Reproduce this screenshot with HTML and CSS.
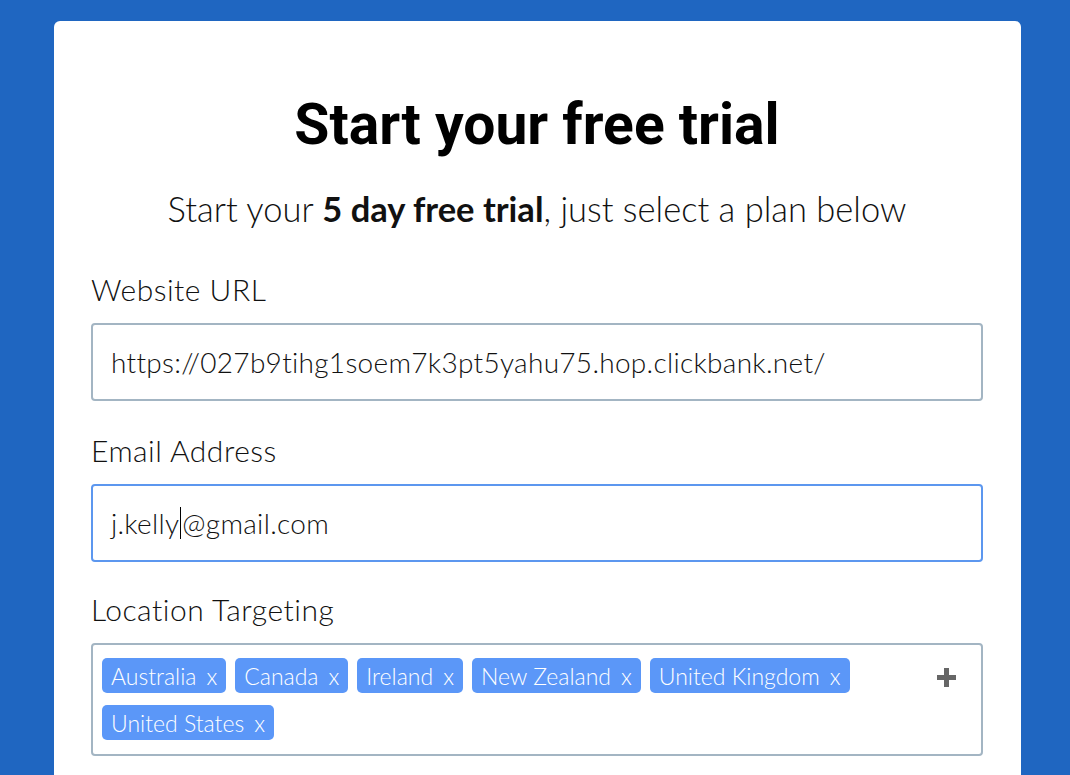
FILE: index.html
```html
<!DOCTYPE html>
<html lang="en">
<head>
  <meta charset="UTF-8" />
  <meta name="viewport" content="width=device-width, initial-scale=1" />
  <title>Start your free trial</title>
  <link rel="stylesheet" href="styles.css">
</head>
<body>
  <div class="card">
    <h1 class="title">Start your free trial</h1>
    <p class="subtitle">Start your <strong>5 day free trial</strong>, just select a plan below</p>

    <div class="field">
      <label class="label" for="url">Website URL</label>
      <div class="input" id="url">https://027b9tihg1soem7k3pt5yahu75.hop.clickbank.net/</div>
    </div>

    <div class="field">
      <label class="label" for="email">Email Address</label>
      <div class="input focused" id="email">j.kelly<span class="caret"></span>@gmail.com</div>
    </div>

    <div class="field">
      <label class="label">Location Targeting</label>
      <div class="tags-box">
        <div class="tags">
          <span class="tag">Australia<span class="x">x</span></span>
          <span class="tag">Canada<span class="x">x</span></span>
          <span class="tag">Ireland<span class="x">x</span></span>
          <span class="tag">New Zealand<span class="x">x</span></span>
          <span class="tag">United Kingdom<span class="x">x</span></span>
          <span class="tag">United States<span class="x">x</span></span>
        </div>
        <span class="add">
          <svg width="19" height="19" viewBox="0 0 19 19"><path d="M7 0h5v7h7v5h-7v7H7v-7H0V7h7z" fill="#666"/></svg>
        </span>
      </div>
    </div>
  </div>
</body>
</html>
```

FILE: styles.css
```css
* {
  margin: 0;
  padding: 0;
  box-sizing: border-box;
}

body {
  background: #1f66c1;
  height: 100vh;
  overflow: hidden;
  font-family: 'Lato', 'Open Sans', sans-serif;
  color: #111;
}

.card {
  background: #fff;
  margin: 21px 49px 0 54px;
  border-radius: 6px 6px 0 0;
  padding: 68px 38px 0 37px;
  min-height: calc(100vh - 21px);
}

.title {
  font-family: 'Roboto', sans-serif;
  font-weight: 700;
  font-size: 57px;
  line-height: 72px;
  text-align: center;
  color: #000;
}

.subtitle {
  font-size: 34.5px;
  line-height: 40px;
  text-align: center;
  margin: 28px 0 42px;
  font-weight: 300;
}

.subtitle strong {
  font-weight: 700;
}

.field {
  margin-top: 31px;
}

.field:last-child {
  margin-top: 29px;
}

.label {
  display: block;
  font-size: 30px;
  line-height: 36px;
  font-weight: 300;
  letter-spacing: 0.5px;
  margin-bottom: 16px;
}

.input {
  height: 78px;
  border: 2px solid #a3b5c3;
  border-radius: 4px;
  padding: 0 18px;
  display: flex;
  align-items: center;
  font-size: 28px;
  font-weight: 300;
  letter-spacing: 0.3px;
  white-space: nowrap;
}

.input.focused {
  border-color: #5c97ef;
}

.caret {
  display: inline-block;
  width: 1px;
  height: 32px;
  background: #000;
  margin: 0 1px;
}

.tags-box {
  border: 2px solid #a3b5c3;
  border-radius: 4px;
  padding: 13px 25px 14px 9px;
  display: flex;
  align-items: flex-start;
}

.tags {
  flex: 1;
  display: flex;
  flex-wrap: wrap;
  gap: 12px 9px;
}

.tag {
  background: #5b97f8;
  color: #fff;
  border-radius: 5px;
  height: 35px;
  padding: 0 9px;
  display: inline-flex;
  align-items: center;
  font-size: 23px;
  font-weight: 300;
}

.tag .x {
  margin-left: 10px;
}

.add {
  margin-top: 10px;
  display: flex;
}
```
